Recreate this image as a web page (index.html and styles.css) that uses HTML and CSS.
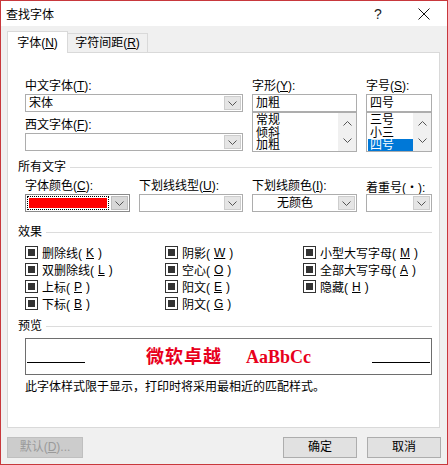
FILE: index.html
```html
<!DOCTYPE html>
<html lang="zh-CN">
<head>
<meta charset="utf-8">
<title>查找字体</title>
<link rel="stylesheet" href="styles.css">
</head>
<body>
<div class="window">
  <div class="titlebar">
    <span class="title">查找字体</span>
    <span class="tb-btn tb-help">?</span>
    <span class="tb-btn tb-close"><svg width="12" height="12" viewBox="0 0 12 12"><path d="M0.5 0.5 L11.5 11.5 M11.5 0.5 L0.5 11.5" stroke="#111" stroke-width="1" fill="none"/></svg></span>
  </div>

  <div class="tabs">
    <div class="tab active">字体(<u>N</u>)</div>
    <div class="tab">字符间距(<u>R</u>)</div>
  </div>

  <div class="panel">
    <div class="grid font-grid">
      <div class="field span2">
        <div class="label">中文字体(<u>T</u>):</div>
        <div class="combo"><span class="val">宋体</span><span class="drop"><svg width="9" height="5" viewBox="0 0 9 5"><path d="M0.5 0.5 L4.5 4.5 L8.5 0.5" fill="none" stroke="#555"/></svg></span></div>
        <div class="label second">西文字体(<u>F</u>):</div>
        <div class="combo"><span class="val"></span><span class="drop"><svg width="9" height="5" viewBox="0 0 9 5"><path d="M0.5 0.5 L4.5 4.5 L8.5 0.5" fill="none" stroke="#555"/></svg></span></div>
      </div>
      <div class="field">
        <div class="label">字形(<u>Y</u>):</div>
        <div class="input">加粗</div>
        <div class="list">
          <div class="items"><div class="item">常规</div><div class="item">倾斜</div><div class="item">加粗</div></div>
          <div class="scroll">
            <svg width="9" height="5" viewBox="0 0 9 5"><path d="M0.5 4.5 L4.5 0.5 L8.5 4.5" fill="none" stroke="#555"/></svg>
            <svg width="9" height="5" viewBox="0 0 9 5"><path d="M0.5 0.5 L4.5 4.5 L8.5 0.5" fill="none" stroke="#555"/></svg>
          </div>
        </div>
      </div>
      <div class="field">
        <div class="label">字号(<u>S</u>):</div>
        <div class="input">四号</div>
        <div class="list">
          <div class="items"><div class="item">三号</div><div class="item">小三</div><div class="item selected">四号</div></div>
          <div class="scroll">
            <svg width="9" height="5" viewBox="0 0 9 5"><path d="M0.5 4.5 L4.5 0.5 L8.5 4.5" fill="none" stroke="#555"/></svg>
            <svg width="9" height="5" viewBox="0 0 9 5"><path d="M0.5 0.5 L4.5 4.5 L8.5 0.5" fill="none" stroke="#555"/></svg>
          </div>
        </div>
      </div>
    </div>

    <div class="section"><span>所有文字</span><i class="rule"></i></div>
    <div class="grid all-grid">
      <div class="field">
        <div class="label">字体颜色(<u>C</u>):</div>
        <div class="combo color"><span class="swatch"><span class="fill"></span></span><span class="drop"><svg width="9" height="5" viewBox="0 0 9 5"><path d="M0.5 0.5 L4.5 4.5 L8.5 0.5" fill="none" stroke="#555"/></svg></span></div>
      </div>
      <div class="field">
        <div class="label">下划线线型(<u>U</u>):</div>
        <div class="combo"><span class="val"></span><span class="drop"><svg width="9" height="5" viewBox="0 0 9 5"><path d="M0.5 0.5 L4.5 4.5 L8.5 0.5" fill="none" stroke="#555"/></svg></span></div>
      </div>
      <div class="field">
        <div class="label">下划线颜色(<u>I</u>):</div>
        <div class="combo"><span class="val center">无颜色</span><span class="drop"><svg width="9" height="5" viewBox="0 0 9 5"><path d="M0.5 0.5 L4.5 4.5 L8.5 0.5" fill="none" stroke="#555"/></svg></span></div>
      </div>
      <div class="field">
        <div class="label">着重号(<span class="dot">・</span>):</div>
        <div class="combo"><span class="val"></span><span class="drop"><svg width="9" height="5" viewBox="0 0 9 5"><path d="M0.5 0.5 L4.5 4.5 L8.5 0.5" fill="none" stroke="#555"/></svg></span></div>
      </div>
    </div>

    <div class="section fx"><span>效果</span><i class="rule"></i></div>
    <div class="checks">
      <div class="check"><span class="cb"></span>删除线(<u>K</u>)</div>
      <div class="check"><span class="cb"></span>双删除线(<u>L</u>)</div>
      <div class="check"><span class="cb"></span>上标(<u>P</u>)</div>
      <div class="check"><span class="cb"></span>下标(<u>B</u>)</div>
      <div class="check"><span class="cb"></span>阴影(<u>W</u>)</div>
      <div class="check"><span class="cb"></span>空心(<u>O</u>)</div>
      <div class="check"><span class="cb"></span>阳文(<u>E</u>)</div>
      <div class="check"><span class="cb"></span>阴文(<u>G</u>)</div>
      <div class="check"><span class="cb"></span>小型大写字母(<u>M</u>)</div>
      <div class="check"><span class="cb"></span>全部大写字母(<u>A</u>)</div>
      <div class="check"><span class="cb"></span>隐藏(<u>H</u>)</div>
    </div>

    <div class="section pv"><span>预览</span><i class="rule"></i></div>
    <div class="preview">
      <i class="pline left"></i>
      <span class="sample"><span class="cjk">微软卓越</span><span class="lat">AaBbCc</span></span>
      <i class="pline right"></i>
    </div>
    <div class="note">此字体样式限于显示，打印时将采用最相近的匹配样式。</div>
  </div>

  <div class="buttons">
    <div class="btn disabled">默认(<u>D</u>)...</div>
    <div class="spacer"></div>
    <div class="btn">确定</div>
    <div class="btn">取消</div>
  </div>
</div>
</body>
</html>
```

FILE: styles.css
```css
* { box-sizing: border-box; }
html, body { margin: 0; padding: 0; background: #fff; }
body {
  font-family: "Liberation Sans", "Noto Sans CJK SC", sans-serif;
  font-size: 12px;
  color: #000;
}
u { text-decoration: underline; text-underline-offset: 1px; }

.window {
  width: 448px;
  height: 465px;
  border: 1px solid #c8383c;
  background: #f0f0f0;
  display: flex;
  flex-direction: column;
}

.titlebar {
  height: 25px;
  background: #fff;
  display: flex;
  align-items: center;
  padding-left: 5px;
  flex: none;
}
.title { flex: 1; font-size: 12px; font-family: "Noto Sans CJK SC", sans-serif; }
.tb-btn {
  width: 46px;
  height: 25px;
  display: flex;
  align-items: center;
  justify-content: center;
}
.tb-help { font-size: 14px; color: #222; }

.tabs {
  display: flex;
  align-items: flex-end;
  height: 21px;
  margin: 5px 0 0 6px;
  flex: none;
}
.tab {
  height: 19px;
  line-height: 18px;
  border: 1px solid #d9d9d9;
  border-bottom: none;
  border-left: none;
  background: #f0f0f0;
  width: 80px;
  text-align: center;
}
.tab.active {
  position: relative;
  z-index: 1;
  height: 22px;
  margin-bottom: -1px;
  line-height: 22px;
  width: 61px;
  border-left: 1px solid #d9d9d9;
  background: #fff;
}

.panel {
  height: 376px;
  margin: 0 7px 0 6px;
  border: 1px solid #d9d9d9;
  background: #fff;
  padding: 26px 7px 0 10px;
  flex: none;
}

.grid {
  display: grid;
  grid-template-columns: 105px 104px 105px 66px;
  column-gap: 9px;
  margin-left: 7px;
}
.span2 { grid-column: span 2; }
.field { display: flex; flex-direction: column; min-width: 0; }
.label {
  height: 15px;
  line-height: 15px;
  white-space: nowrap;
  overflow: hidden;
}
.label.second { margin-top: 6px; }
.dot { font-family: "Noto Sans CJK SC", sans-serif; }

.combo {
  height: 18px;
  border: 1px solid #adadad;
  background: #fff;
  display: flex;
}
.combo .val {
  flex: 1;
  line-height: 16px;
  padding-left: 3px;
  white-space: nowrap;
}
.combo .val.center { text-align: center; padding-left: 0; }
.drop {
  width: 17px;
  margin: 1px;
  background: #e5e5e5;
  border: 1px solid #cdcdcd;
  display: flex;
  align-items: center;
  justify-content: center;
}
.combo.color { border-color: #8a8a8a; }
.combo.color .drop { background: #d8d8d8; border-color: #bdbdbd; }
.swatch {
  flex: 1;
  margin: 1px;
  border: 1px dotted #000;
  padding: 1px;
  display: flex;
}
.fill { flex: 1; background: #ff0000; }

.input {
  height: 18px;
  border: 1px solid #adadad;
  line-height: 16px;
  padding-left: 3px;
  white-space: nowrap;
}
.list {
  height: 40px;
  border: 1px solid #adadad;
  display: flex;
  overflow: hidden;
}
.items {
  flex: 1;
  padding: 1px 0 0 1px;
  font-size: 12px;
  line-height: 12.5px;
  overflow: hidden;
}
.item { height: 12.5px; padding-left: 2px; white-space: nowrap; }
.item.selected { background: #0078d7; color: #fff; }
.scroll {
  width: 18px;
  background: #f0f0f0;
  display: flex;
  flex-direction: column;
  align-items: center;
  justify-content: space-between;
  padding: 8px 0 8px;
}

.section {
  display: flex;
  align-items: center;
  height: 14px;
  line-height: 14px;
  margin-top: 8px;
}
.section .rule {
  flex: 1;
  height: 1px;
  background: #dcdcdc;
  margin-left: 4px;
}
.all-grid { margin-top: 5px; }
.section.fx { margin-top: 13px; }
.section.pv { margin-top: 7px; }

.checks {
  display: grid;
  grid-template-columns: 140px 138px 1fr;
  grid-template-rows: repeat(4, 17px);
  grid-auto-flow: column;
  margin: 5px 0 0 7px;
}
.check {
  display: flex;
  align-items: center;
  gap: 4px;
  white-space: nowrap;
}
.cb {
  width: 13px;
  height: 13px;
  border: 1px solid #333;
  background: #333;
  box-shadow: inset 0 0 0 2px #fff;
  flex: none;
}

.preview {
  height: 37px;
  margin: 5px 0 0 7px;
  border: 1px solid #6e6e6e;
  display: flex;
  align-items: center;
}
.pline {
  width: 58px;
  height: 1px;
  background: #000;
  margin-top: 11px;
}
.pline.left { margin-left: 1px; }
.pline.right { margin-right: 1px; }
.sample {
  flex: 1;
  text-align: center;
  color: #e8001c;
  font-weight: bold;
  font-size: 18px;
  line-height: 22px;
  margin-top: -2px;
}
.sample .cjk { font-family: "Noto Sans CJK SC", sans-serif; letter-spacing: 1px; }
.sample .lat { font-family: "Liberation Serif", serif; margin-left: 24px; }

.note {
  margin: 5px 0 0 7px;
  height: 14px;
  line-height: 14px;
  white-space: nowrap;
}

.buttons {
  display: flex;
  height: 21px;
  margin-top: 9px;
  padding: 0 6px 0 6px;
  gap: 10px;
  flex: none;
}
.spacer { flex: 1; }
.btn {
  width: 74px;
  height: 21px;
  line-height: 19px;
  text-align: center;
  background: #e1e1e1;
  border: 1px solid #adadad;
}
.btn.disabled {
  width: 76px;
  background: #cccccc;
  border-color: #bfbfbf;
  color: #9a9a9a;
}
```
